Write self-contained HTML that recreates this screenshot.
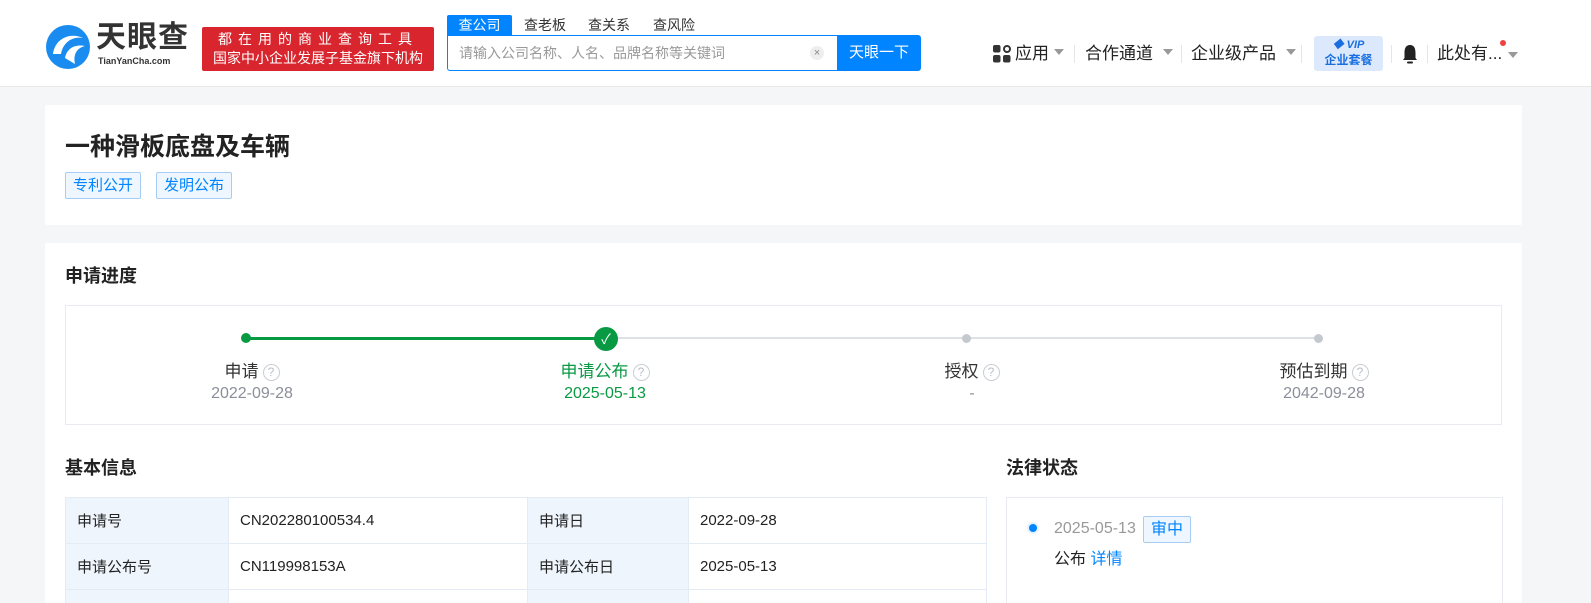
<!DOCTYPE html>
<html><head><meta charset="utf-8"><style>
*{margin:0;padding:0;box-sizing:border-box}
html{overflow:hidden;height:603px}
body{width:1591px;height:603px;overflow:hidden;background:#f5f6f8;font-family:"Liberation Sans","Noto Sans CJK SC",sans-serif;color:#333;position:relative}
.a{position:absolute}
.hdr{left:0;top:0;width:1591px;height:87px;background:#fff;border-bottom:1px solid #e8e8e8}
.card{background:#fff;border-radius:2px}
.tag{border:1px solid #a8cdf5;background:#eef6ff;color:#0084ff;font-size:15px;border-radius:2px;height:27px;line-height:25px;padding:0 7px}
.q{display:inline-block;width:17px;height:17px;border:1px solid #c8cdd4;border-radius:50%;color:#b8bec6;font-size:12px;line-height:15px;text-align:center;vertical-align:1px;margin-left:4px}
.nav{font-size:17px;color:#222;top:43px;line-height:22px}
.tri{display:inline-block;border:5px solid transparent;border-top:6px solid #999;vertical-align:-1px;margin-left:5px}
td{border:1px solid #e3ebf5;height:46px;font-size:15px;color:#222;padding-left:11px}
td.l{background:#eef5fc;}
.lb{width:200px;text-align:center;font-size:17px;line-height:22px;top:361px}
.dt{width:200px;text-align:center;font-size:16px;line-height:20px;top:384px}
</style></head><body>
<div class="a hdr"></div>
<svg class="a" style="left:45px;top:24px" width="48" height="46" viewBox="0 0 48 46"><circle cx="23" cy="23" r="22" fill="#1a8cf0"/><path d="M8 30 C10 14 26 8 38 14 C28 12 18 18 16 30 Z" fill="#fff"/><path d="M20 34 C22 24 30 20 40 22 C32 24 28 30 30 40 Z" fill="#fff"/></svg>
<div class="a" style="left:96px;top:20px;font-size:30px;line-height:36px;font-weight:bold;color:#333;letter-spacing:1px">天眼查</div>
<div class="a" style="left:98px;top:56px;font-size:9px;line-height:11px;font-weight:bold;color:#333">TianYanCha.com</div>
<div class="a" style="left:202px;top:27px;width:232px;height:44px;background:#d9262e;border-radius:2px;color:#fff;font-size:14px;text-align:center;line-height:19px;padding-top:3px"><div style="letter-spacing:6px">都在用的商业查询工具</div><div>国家中小企业发展子基金旗下机构</div></div>
<div class="a" style="left:447px;top:15px;width:65px;height:20px;background:#0084ff;color:#fff;font-size:14px;text-align:center;line-height:20px;border-radius:2px 2px 0 0">查公司</div>
<div class="a" style="left:524px;top:16px;font-size:14px;line-height:18px;color:#333">查老板</div>
<div class="a" style="left:588px;top:16px;font-size:14px;line-height:18px;color:#333">查关系</div>
<div class="a" style="left:653px;top:16px;font-size:14px;line-height:18px;color:#333">查风险</div>
<div class="a" style="left:447px;top:35px;width:390px;height:36px;border:1px solid #0084ff;border-right:none;border-radius:0 0 0 3px;background:#fff"></div>
<div class="a" style="left:459px;top:44px;font-size:14px;line-height:18px;color:#999">请输入公司名称、人名、品牌名称等关键词</div>
<div class="a" style="left:810px;top:46px;width:14px;height:14px;border-radius:50%;background:#eee;color:#888;font-size:11px;line-height:14px;text-align:center">×</div>
<div class="a" style="left:837px;top:35px;width:84px;height:36px;background:#0084ff;color:#fff;font-size:15px;text-align:center;line-height:36px;border-radius:0 3px 3px 0">天眼一下</div>
<svg class="a" style="left:993px;top:45px" width="18" height="18"><rect x="0" y="0" width="7.5" height="7.5" rx="2" fill="#333"/><rect x="11" y="1" width="6" height="6" rx="3" fill="none" stroke="#333" stroke-width="2"/><rect x="0" y="10" width="7.5" height="7.5" rx="2" fill="#333"/><rect x="10" y="10" width="7.5" height="7.5" rx="2" fill="#333"/></svg>
<div class="a nav" style="left:1015px">应用<span class="tri"></span></div>
<div class="a" style="left:1074px;top:45px;width:1px;height:18px;background:#e5e5e5"></div>
<div class="a nav" style="left:1085px">合作通道 <span class="tri"></span></div>
<div class="a" style="left:1181px;top:45px;width:1px;height:18px;background:#e5e5e5"></div>
<div class="a nav" style="left:1191px">企业级产品 <span class="tri"></span></div>
<div class="a" style="left:1301px;top:45px;width:1px;height:18px;background:#e5e5e5"></div>
<div class="a" style="left:1314px;top:36px;width:69px;height:35px;background:#dce9fc;border-radius:3px;color:#1a6fe0;font-weight:bold;text-align:center"><div style="font-size:11px;line-height:15px;padding-top:2px;font-style:italic">◆ VIP</div><div style="font-size:12px;line-height:15px">企业套餐</div></div>
<div class="a" style="left:1391px;top:45px;width:1px;height:18px;background:#e5e5e5"></div>
<svg class="a" style="left:1402px;top:44px" width="16" height="20"><path d="M8 1 C3 1 2.5 6 2.5 9 L2.5 14 L1 16 L15 16 L13.5 14 L13.5 9 C13.5 6 13 1 8 1Z" fill="#222"/><rect x="5" y="17.5" width="6" height="2" rx="1" fill="#222"/></svg>
<div class="a" style="left:1427px;top:45px;width:1px;height:18px;background:#e5e5e5"></div>
<div class="a nav" style="left:1437px">此处有...</div>
<div class="a" style="left:1500px;top:40px;width:6px;height:6px;border-radius:50%;background:#f04040"></div>
<div class="a" style="left:1508px;top:49px"><span class="tri" style="margin:0"></span></div>
<div class="a card" style="left:45px;top:105px;width:1477px;height:120px"></div>
<div class="a" style="left:65px;top:130px;font-size:25px;line-height:34px;font-weight:bold;color:#222">一种滑板底盘及车辆</div>
<div class="a tag" style="left:65px;top:172px">专利公开</div>
<div class="a tag" style="left:156px;top:172px">发明公布</div>
<div class="a card" style="left:45px;top:243px;width:1477px;height:360px"></div>
<div class="a" style="left:65px;top:264px;font-size:18px;line-height:24px;font-weight:bold;color:#222">申请进度</div>
<div class="a" style="left:65px;top:305px;width:1437px;height:120px;border:1px solid #e8ebf0"></div>
<div class="a" style="left:246px;top:337px;width:360px;height:3px;background:#089a43"></div>
<div class="a" style="left:606px;top:337px;width:712px;height:2px;background:#dde0e5"></div>
<div class="a" style="left:241px;top:333px;width:10px;height:10px;border-radius:50%;background:#089a43"></div>
<div class="a" style="left:594px;top:327px;width:24px;height:24px;border-radius:50%;background:#089a43;color:#fff;text-align:center;line-height:24px;font-size:14px">✓</div>
<div class="a" style="left:962px;top:334px;width:9px;height:9px;border-radius:50%;background:#c4c8cf"></div>
<div class="a" style="left:1314px;top:334px;width:9px;height:9px;border-radius:50%;background:#c4c8cf"></div>
<div class="a lb" style="left:152px;color:#333">申请<span class="q">?</span></div>
<div class="a dt" style="left:152px;color:#8a8f99">2022-09-28</div>
<div class="a lb" style="left:505px;color:#089a43">申请公布<span class="q">?</span></div>
<div class="a dt" style="left:505px;color:#089a43">2025-05-13</div>
<div class="a lb" style="left:872px;color:#333">授权<span class="q">?</span></div>
<div class="a dt" style="left:872px;color:#8a8f99">-</div>
<div class="a lb" style="left:1224px;color:#333">预估到期<span class="q">?</span></div>
<div class="a dt" style="left:1224px;color:#8a8f99">2042-09-28</div>
<div class="a" style="left:65px;top:456px;font-size:18px;line-height:24px;font-weight:bold;color:#222">基本信息</div>
<div class="a" style="left:1006px;top:456px;font-size:18px;line-height:24px;font-weight:bold;color:#222">法律状态</div>
<table class="a" style="left:65px;top:497px;width:922px;border-collapse:collapse">
<tr><td class="l" style="width:163px">申请号</td><td style="width:299px">CN202280100534.4</td><td class="l" style="width:161px">申请日</td><td>2022-09-28</td></tr>
<tr><td class="l">申请公布号</td><td>CN119998153A</td><td class="l">申请公布日</td><td>2025-05-13</td></tr>
<tr><td class="l" style="height:14px;border-bottom:none"></td><td style="height:14px;border-bottom:none"></td><td class="l" style="height:14px;border-bottom:none"></td><td style="height:14px;border-bottom:none"></td></tr>
</table>
<div class="a" style="left:1006px;top:497px;width:497px;height:106px;border:1px solid #e8ebf0;border-bottom:none"></div>
<div class="a" style="left:1027px;top:522px;width:12px;height:12px;border-radius:50%;background:#e6f2ff"></div>
<div class="a" style="left:1029px;top:524px;width:8px;height:8px;border-radius:50%;background:#0084ff"></div>
<div class="a" style="left:1054px;top:519px;font-size:16px;line-height:20px;color:#999">2025-05-13</div>
<div class="a tag" style="left:1143px;top:516px;font-size:16px">审中</div>
<div class="a" style="left:1054px;top:550px;font-size:16px;line-height:20px;color:#222">公布 <span style="color:#0084ff">详情</span></div>
</body></html>
